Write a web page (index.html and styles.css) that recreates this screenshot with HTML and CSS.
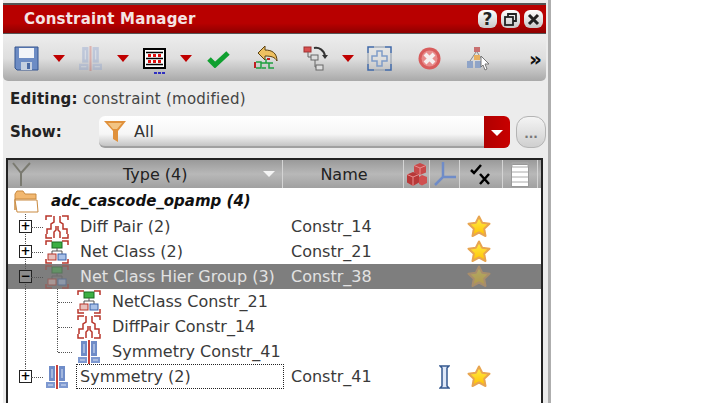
FILE: index.html
```html
<!DOCTYPE html>
<html lang="en">

<head>
    <meta charset="UTF-8">
    <title>Constraint Manager</title>
    <link rel="stylesheet" href="styles.css">
</head>

<body>
    <svg class="defs" width="0" height="0">
        <defs>
            <linearGradient id="starFill" x1="0" y1="0" x2="0" y2="1">
                <stop offset="0" stop-color="#fff04a" />
                <stop offset="1" stop-color="#ffc000" />
            </linearGradient>
            <symbol id="star" viewBox="0 0 24 24">
                <path d="M12 1.500l3.200 6.300 7.300 1-5.300 5 1.300 7.200L12 17.500 5.500 21l1.300-7.200-5.300-5 7.300-1z" fill="url(#starFill)" stroke="#e8a550" stroke-width="2" stroke-linejoin="round" />
            </symbol>
            <symbol id="diff" viewBox="0 0 24 24" fill="none" stroke="#b8352a" stroke-width="1.500">
                <path d="M1 5V1h6M23 5V1h-6M1 19v4h6M23 19v4h-6" />
                <path d="M9 1v6l-3 2v5H2v5M15 1v6l3 2v5h4v5M9 23v-6l2-2v-4M15 23v-6l-2-2v-4" />
            </symbol>
            <symbol id="net" viewBox="0 0 24 24">
                <path d="M1 5V1h6M23 5V1h-6M1 19v4h6M23 19v4h-6" fill="none" stroke="#b8352a" stroke-width="1.500" />
                <rect x="7" y="2" width="10" height="6" fill="#3cb043" stroke="#1c6b22" />
                <path d="M12 8v3M7 14v-3h10v3" fill="none" stroke="#555" />
                <rect x="3" y="14" width="8" height="6" fill="#e8c0bc" stroke="#b8352a" />
                <rect x="13" y="14" width="8" height="6" fill="#a8c0e8" stroke="#3a62a8" />
            </symbol>
            <symbol id="sym" viewBox="0 0 24 24">
                <rect x="4" y="1" width="6" height="15" fill="#6f8cc8" />
                <rect x="14" y="1" width="6" height="15" fill="#6f8cc8" />
                <rect x="1" y="17" width="9" height="6" fill="#7d98d0" />
                <rect x="14" y="17" width="9" height="6" fill="#7d98d0" />
                <rect x="11" y="0" width="2" height="24" fill="#c9423a" />
                <path d="M7 4v9M17 4v9M3 20h5M16 20h5" stroke="#d8e2f4" />
            </symbol>
            <symbol id="drop" viewBox="0 0 12 7">
                <path d="M0 0h12L6 7z" fill="#c00000" />
            </symbol>
        </defs>
    </svg>

    <div class="panel">
        <header class="titlebar">
            <span class="title">Constraint Manager</span>
            <div class="win-btns">
                <span class="win-btn">?</span>
                <span class="win-btn">
                    <svg width="13" height="13" viewBox="0 0 13 13" fill="none" stroke="#222" stroke-width="1.800">
                        <path d="M4 4V1h8v7H9" />
                        <rect x="1" y="4" width="8" height="8" />
                    </svg>
                </span>
                <span class="win-btn">
                    <svg width="13" height="13" viewBox="0 0 13 13" fill="none" stroke="#222" stroke-width="3">
                        <path d="M2 2l9 9M11 2l-9 9" />
                    </svg>
                </span>
            </div>
        </header>

        <div class="toolbar">
            <svg class="tool save" width="25" height="25" viewBox="0 0 25 25">
                <path d="M1 1h23v23H3l-2-2z" fill="#6d8cc4" stroke="#34558f" />
                <rect x="5" y="2" width="15" height="10" fill="#f2f4f8" />
                <rect x="7" y="16" width="11" height="8" fill="#c4cfe0" />
                <rect x="13" y="17" width="3" height="6" fill="#4a6aa4" />
            </svg>
            <svg class="drop" width="12" height="7"><use href="#drop" /></svg>
            <svg class="tool dim sym-tool" width="25" height="25"><use href="#sym" /></svg>
            <svg class="drop" width="12" height="7"><use href="#drop" /></svg>
            <svg class="tool matrix" width="23" height="27" viewBox="0 0 23 27">
                <rect x="1" y="1" width="21" height="19" fill="#fff" stroke="#000" stroke-width="2" />
                <path d="M3 4.500h17M3 10.500h17M3 16.500h17" stroke="#000" stroke-width="1.500" />
                <path d="M5 7.500h3M10 7.500h3M15 7.500h3M5 13.500h3M10 13.500h3M15 13.500h3" stroke="#e01010" stroke-width="3" />
                <path d="M11 25h3M15 25h3M19 25h3" stroke="#3030c0" stroke-width="2" />
            </svg>
            <svg class="drop" width="12" height="7"><use href="#drop" /></svg>
            <svg class="tool check" width="23" height="18" viewBox="0 0 23 18">
                <path d="M2 9l6 6L21 3" fill="none" stroke="#10a030" stroke-width="5" />
            </svg>
            <svg class="tool undo" width="25" height="25" viewBox="0 0 25 25">
                <path d="M4 8l7-7v4c7 0 12 3 12 11-2-4-6-5-12-5v4z" fill="#eec060" stroke="#5a4010" />
                <path d="M2 17h5v6H2M12 14v4H7M12 23h-4M12 18h7M15 18v5h5" fill="none" stroke="#20a040" stroke-width="1.500" />
                <path d="M1 17v6M13 14h3" stroke="#c02020" stroke-width="2" />
            </svg>
            <svg class="tool tree" width="25" height="25" viewBox="0 0 25 25">
                <rect x="1" y="1" width="7" height="5" fill="#d85050" stroke="#a03030" />
                <rect x="8" y="9" width="7" height="5" fill="#ddd" stroke="#666" />
                <rect x="13" y="19" width="7" height="5" fill="#ddd" stroke="#666" />
                <path d="M5 6v5h3M12 14v7h1" fill="none" stroke="#666" />
                <path d="M11 2c5-1 10 2 11 8" fill="none" stroke="#333" stroke-width="2" />
                <path d="M19 9h6l-3 4z" fill="#333" />
            </svg>
            <svg class="drop" width="12" height="7"><use href="#drop" /></svg>
            <svg class="tool fit" width="25" height="25" viewBox="0 0 25 25" fill="none">
                <path d="M1 7V1h6M18 1h6v6M1 18v6h6M24 18v6h-6" stroke="#3f68a8" stroke-width="1.500" />
                <path d="M1 7v11M7 1h11M24 7v11M7 24h11" stroke="#8a98aa" />
                <path d="M10 5h5v5h5v5h-5v5h-5v-5H5v-5h5z" stroke="#7f9cc8" stroke-width="1.500" />
            </svg>
            <svg class="tool stop" width="23" height="23" viewBox="0 0 23 23">
                <circle cx="11.500" cy="11.500" r="11" fill="#d85c5c" />
                <circle cx="11.500" cy="11.500" r="8" fill="#e88c8c" />
                <path d="M7 7l9 9M16 7l-9 9" stroke="#f6eeee" stroke-width="4" />
            </svg>
            <svg class="tool hier" width="25" height="25" viewBox="0 0 25 25">
                <rect x="8" y="1" width="6" height="5" fill="#c87070" />
                <path d="M10 6l-6 9M11 6l6 9" stroke="#888" />
                <rect x="8" y="9" width="6" height="5" fill="#e8b060" />
                <rect x="1" y="15" width="6" height="7" fill="#8fa4c8" />
                <rect x="9" y="15" width="6" height="7" fill="#8fa4c8" />
                <path d="M15 10l8 8-4 0 2 5-2 1-2-5-2 2z" fill="#fff" stroke="#777" />
            </svg>
            <span class="more">&raquo;</span>
        </div>

        <div class="editing"><b>Editing:</b> constraint (modified)</div>

        <div class="show-row">
            <b class="show-label">Show:</b>
            <div class="combo">
                <svg class="funnel" width="22" height="21" viewBox="0 0 22 21">
                    <path d="M0 0h22L14 10v11l-5-3v-8z" fill="#e0913c" />
                    <path d="M4 2h14l-5 6h-4z" fill="#f2c484" />
                </svg>
                <span class="combo-text">All</span>
                <span class="combo-arrow"></span>
            </div>
            <span class="dots-btn">...</span>
        </div>

        <div class="table">
            <div class="thead">
                <div class="th th-type">
                    <svg class="y-icon" width="19" height="24" viewBox="0 0 19 24">
                        <path d="M1 1l8 10v13M18 1L9 11" fill="none" stroke="#7a7a70" stroke-width="2" />
                    </svg>
                    <span class="th-label">Type (4)</span>
                    <span class="sort"></span>
                </div>
                <div class="th th-name">Name</div>
                <div class="th">
                    <svg width="20" height="25" viewBox="0 0 20 25">
                        <path d="M13 1l6 2.500v7L13 13l-6-2.500v-7z" fill="#c84a4a" />
                        <path d="M7 3.500l6 2.500 6-2.500M13 6v7" fill="none" stroke="#e89090" />
                        <path d="M6 10l6 2.500v8L6 24l-6-3.500v-8z" fill="#b83838" />
                        <path d="M0 12.500l6 2.500 6-2.500M6 15v9" fill="none" stroke="#e89090" />
                        <path d="M15 13l5 2v6l-5 2.500-3-1.500v-7z" fill="#d05050" />
                    </svg>
                </div>
                <div class="th">
                    <svg width="24" height="25" viewBox="0 0 24 25" fill="none" stroke="#6f8cc8" stroke-width="2.500">
                        <path d="M10 0v15L2 23M10 15h13" />
                    </svg>
                </div>
                <div class="th">
                    <svg width="22" height="22" viewBox="0 0 22 22" fill="none" stroke="#000" stroke-width="2.500">
                        <path d="M1 7l3 3 7-8M10 11l9 10M19 11l-9 10" />
                    </svg>
                </div>
                <div class="th th-last">
                    <svg width="18" height="25" viewBox="0 0 18 25">
                        <rect x=".5" y="2.500" width="17" height="22" fill="#fff" stroke="#999" />
                        <path d="M1 1h16v4H1zM1 10h16M1 15h16M1 20h16" fill="none" stroke="#aaa" />
                    </svg>
                </div>
            </div>

            <div class="row row-root">
                <div class="cell-type">
                    <svg class="folder" width="25" height="23" viewBox="0 0 25 23">
                        <path d="M1 20V4l2-3h6l2 3h11v5H1z" fill="#f2b870" stroke="#c98a40" />
                        <path d="M3 22L1 10h22l1 12z" fill="#fff" stroke="#c98a40" />
                    </svg>
                    <b class="root-label">adc_cascode_opamp (4)</b>
                </div>
            </div>

            <div class="row">
                <div class="cell-type">
                    <span class="guide"><span class="twisty">+</span></span>
                    <svg class="ico" width="24" height="24"><use href="#diff" /></svg>
                    <span class="label">Diff Pair (2)</span>
                </div>
                <span class="cell-name">Constr_14</span>
                <svg class="fav" width="24" height="24"><use href="#star" /></svg>
            </div>

            <div class="row">
                <div class="cell-type">
                    <span class="guide"><span class="twisty">+</span></span>
                    <svg class="ico" width="24" height="24"><use href="#net" /></svg>
                    <span class="label">Net Class (2)</span>
                </div>
                <span class="cell-name">Constr_21</span>
                <svg class="fav" width="24" height="24"><use href="#star" /></svg>
            </div>

            <div class="row row-sel">
                <div class="cell-type">
                    <span class="guide"><span class="twisty">&minus;</span></span>
                    <svg class="ico faded" width="24" height="24"><use href="#net" /></svg>
                    <span class="label">Net Class Hier Group (3)</span>
                </div>
                <span class="cell-name">Constr_38</span>
                <svg class="fav faded" width="24" height="24"><use href="#star" /></svg>
            </div>

            <div class="row">
                <div class="cell-type">
                    <span class="guide guide-plain"></span>
                    <span class="branch"></span>
                    <svg class="ico" width="24" height="24"><use href="#net" /></svg>
                    <span class="label">NetClass Constr_21</span>
                </div>
            </div>

            <div class="row">
                <div class="cell-type">
                    <span class="guide guide-plain"></span>
                    <span class="branch"></span>
                    <svg class="ico" width="24" height="24"><use href="#diff" /></svg>
                    <span class="label">DiffPair Constr_14</span>
                </div>
            </div>

            <div class="row">
                <div class="cell-type">
                    <span class="guide guide-plain"></span>
                    <span class="branch branch-end"></span>
                    <svg class="ico" width="24" height="24"><use href="#sym" /></svg>
                    <span class="label">Symmetry Constr_41</span>
                </div>
            </div>

            <div class="row">
                <div class="cell-type">
                    <span class="guide guide-end"><span class="twisty">+</span></span>
                    <svg class="ico" width="24" height="24"><use href="#sym" /></svg>
                    <span class="label label-focus">Symmetry (2)</span>
                </div>
                <span class="cell-name">Constr_41</span>
                <svg class="range" width="11" height="24" viewBox="0 0 11 24">
                    <path d="M3 3L1 1h9L8 3v18l2 2H1l2-2z" fill="#dfe8f8" stroke="#35588f" stroke-width="1.500" />
                </svg>
                <svg class="fav fav-last" width="24" height="24"><use href="#star" /></svg>
            </div>
        </div>
    </div>
</body>

</html>
```
FILE: styles.css
```css
html,
body {
    margin: 0;
    padding: 0;
    height: 408px;
    overflow: hidden;
    background-color: #ffffff;
}

body {
    font-family: "DejaVu Sans", sans-serif;
    color: #333333;
}

.defs {
    position: absolute;
}

.panel {
    box-sizing: border-box;
    width: 548px;
    height: 403px;
    margin-left: 3px;
    padding-right: 2px;
    padding-top: 3px;
    background-color: #ececec;
    border-right: 3px solid #aeaeae;
    display: flex;
    flex-direction: column;
}

/* title bar */
.titlebar {
    box-sizing: border-box;
    height: 31px;
    display: flex;
    align-items: center;
    justify-content: space-between;
    padding: 0 3px 0 21px;
    background: linear-gradient(#b80000 0%, #b80000 65%, #8e0000 100%);
    border: 1px solid #555555;
    border-width: 2px 0 1px 0;
}

.title {
    font-size: 15px;
    font-weight: bold;
    letter-spacing: 0.2px;
    color: #f4e4e4;
}

.win-btns {
    display: flex;
    gap: 4px;
}

.win-btn {
    width: 19px;
    height: 18px;
    border-radius: 6px;
    background: linear-gradient(#ffffff, #c8c8c8);
    display: flex;
    align-items: center;
    justify-content: center;
    font-size: 17px;
    font-weight: bold;
    color: #222222;
}

/* toolbar */
.toolbar {
    box-sizing: border-box;
    height: 45px;
    margin-top: 2px;
    display: flex;
    align-items: center;
    background: linear-gradient(#ececec 0%, #dedede 50%, #a9a9a9 100%);
    border-radius: 0 0 5px 5px;
}

.tool {
    flex: none;
}

.drop {
    flex: none;
    margin-left: 14px;
}

.save { margin-left: 11px; }
.sym-tool { margin-left: 13px; }
.matrix { margin-left: 14px; margin-top: 5px; }
.check { margin-left: 15px; }
.undo { margin-left: 24px; margin-top: -2px; }
.tree { margin-left: 24px; }
.fit { margin-left: 13px; }
.stop { margin-left: 26px; }
.hier { margin-left: 25px; }

.dim {
    opacity: 0.3;
}

.more {
    margin-left: 38px;
    font-size: 20px;
    font-weight: bold;
    color: #111111;
}

/* editing and filter */
.editing {
    height: 35px;
    line-height: 37px;
    padding-left: 7px;
    font-size: 15px;
    letter-spacing: 0.25px;
    color: #444444;
}

.editing b {
    color: #222222;
}

.show-row {
    display: flex;
    align-items: center;
    height: 32px;
    padding-left: 7px;
}

.show-label {
    width: 89px;
    font-size: 15px;
    color: #222222;
}

.combo {
    box-sizing: border-box;
    width: 411px;
    height: 32px;
    display: flex;
    align-items: center;
    padding-left: 5px;
    background: linear-gradient(#ffffff 0%, #f6f6f6 60%, #c4c4c4 100%);
    border-radius: 6px;
    border-bottom: 2px solid #a0a0a0;
}

.funnel {
    flex: none;
}

.combo-text {
    flex: 1;
    margin-left: 8px;
    font-size: 16px;
}

.combo-arrow {
    align-self: stretch;
    margin-bottom: -2px;
    width: 26px;
    background: linear-gradient(90deg, #b00000, #c80000);
    border-radius: 0 6px 6px 0;
    position: relative;
}

.combo-arrow::after {
    content: "";
    position: absolute;
    left: 7px;
    top: 14px;
    border: 6px solid transparent;
    border-bottom-width: 0;
    border-top-color: #ffffff;
}

.dots-btn {
    box-sizing: border-box;
    width: 30px;
    height: 32px;
    margin-left: 6px;
    border-radius: 12px;
    background: linear-gradient(#f4f4f4, #cfcfcf);
    border: 1px solid #b4b4b4;
    text-align: center;
    line-height: 34px;
    font-size: 12px;
    font-weight: bold;
    color: #777777;
}

/* table */
.table {
    flex: 1;
    margin: 10px 3px 0 3px;
    background-color: #ffffff;
    border: 2px solid #222222;
    border-bottom: 0;
    overflow: hidden;
}

.thead {
    display: grid;
    grid-template-columns: 275px 121px 26px 30px 43px 35px 1fr;
    height: 28px;
    background: linear-gradient(#9a9a9a 0%, #b8b8b8 50%, #a0a0a0 100%);
    font-size: 16px;
    color: #222222;
}

.th {
    display: flex;
    align-items: center;
    justify-content: center;
    border-right: 1px solid #d4d4d4;
    overflow: hidden;
}

.th-type {
    justify-content: flex-start;
    padding-left: 4px;
}

.th-name {
    padding-left: 2px;
}

.y-icon {
    flex: none;
}

.th-label {
    margin-left: 92px;
}

.sort {
    margin-left: 75px;
    border: 6px solid transparent;
    border-bottom-width: 0;
    border-top-color: #f4f4f4;
}

.row {
    display: flex;
    align-items: center;
    height: 25px;
    font-size: 16px;
    color: #3a3a3a;
}

.row-root {
    height: 26px;
}

.row-sel {
    background-color: #7e7e7e;
    color: #e2e2e2;
}

.cell-type {
    flex: none;
    width: 276px;
    height: 100%;
    display: flex;
    align-items: center;
}

.folder {
    margin-left: 6px;
}

.root-label {
    margin-left: 12px;
    font-style: italic;
    color: #111111;
    font-size: 15px;
}

/* tree guides */
.guide {
    flex: none;
    position: relative;
    width: 37px;
    height: 100%;
}

.guide::before {
    content: "";
    position: absolute;
    left: 17px;
    top: 0;
    bottom: 0;
    border-left: 1px dotted #555555;
}

.guide::after {
    content: "";
    position: absolute;
    left: 23px;
    top: 50%;
    width: 12px;
    border-top: 1px dotted #555555;
}

.guide-plain {
    width: 49px;
}

.guide-plain::after {
    display: none;
}

.guide-end::before {
    bottom: 50%;
}

.twisty {
    box-sizing: border-box;
    position: absolute;
    left: 11px;
    top: 6px;
    width: 13px;
    height: 13px;
    background-color: #ffffff;
    border: 1px solid #222222;
    color: #000000;
    font-size: 12px;
    font-weight: bold;
    line-height: 10px;
    text-align: center;
}

.row-sel .twisty {
    background-color: #8c8c8c;
}

.branch {
    flex: none;
    position: relative;
    width: 20px;
    height: 100%;
    border-left: 1px dotted #555555;
    box-sizing: border-box;
}

.branch::after {
    content: "";
    position: absolute;
    left: 0;
    right: 5px;
    top: 50%;
    border-top: 1px dotted #555555;
}

.branch-end {
    height: 50%;
    align-self: flex-start;
}

.branch-end::after {
    top: 100%;
}

.ico {
    flex: none;
}

.faded {
    opacity: 0.4;
}

.label {
    margin-left: 11px;
    white-space: nowrap;
}

.label-focus {
    box-sizing: border-box;
    width: 210px;
    height: 25px;
    line-height: 23px;
    margin-left: 7px;
    padding-left: 3px;
    border: 1px dotted #222222;
}

.cell-name {
    flex: none;
    width: 183px;
    padding-left: 7px;
    box-sizing: border-box;
}

.fav {
    flex: none;
}

.range {
    flex: none;
    margin-left: -28px;
}

.fav-last {
    margin-left: 17px;
}
```
